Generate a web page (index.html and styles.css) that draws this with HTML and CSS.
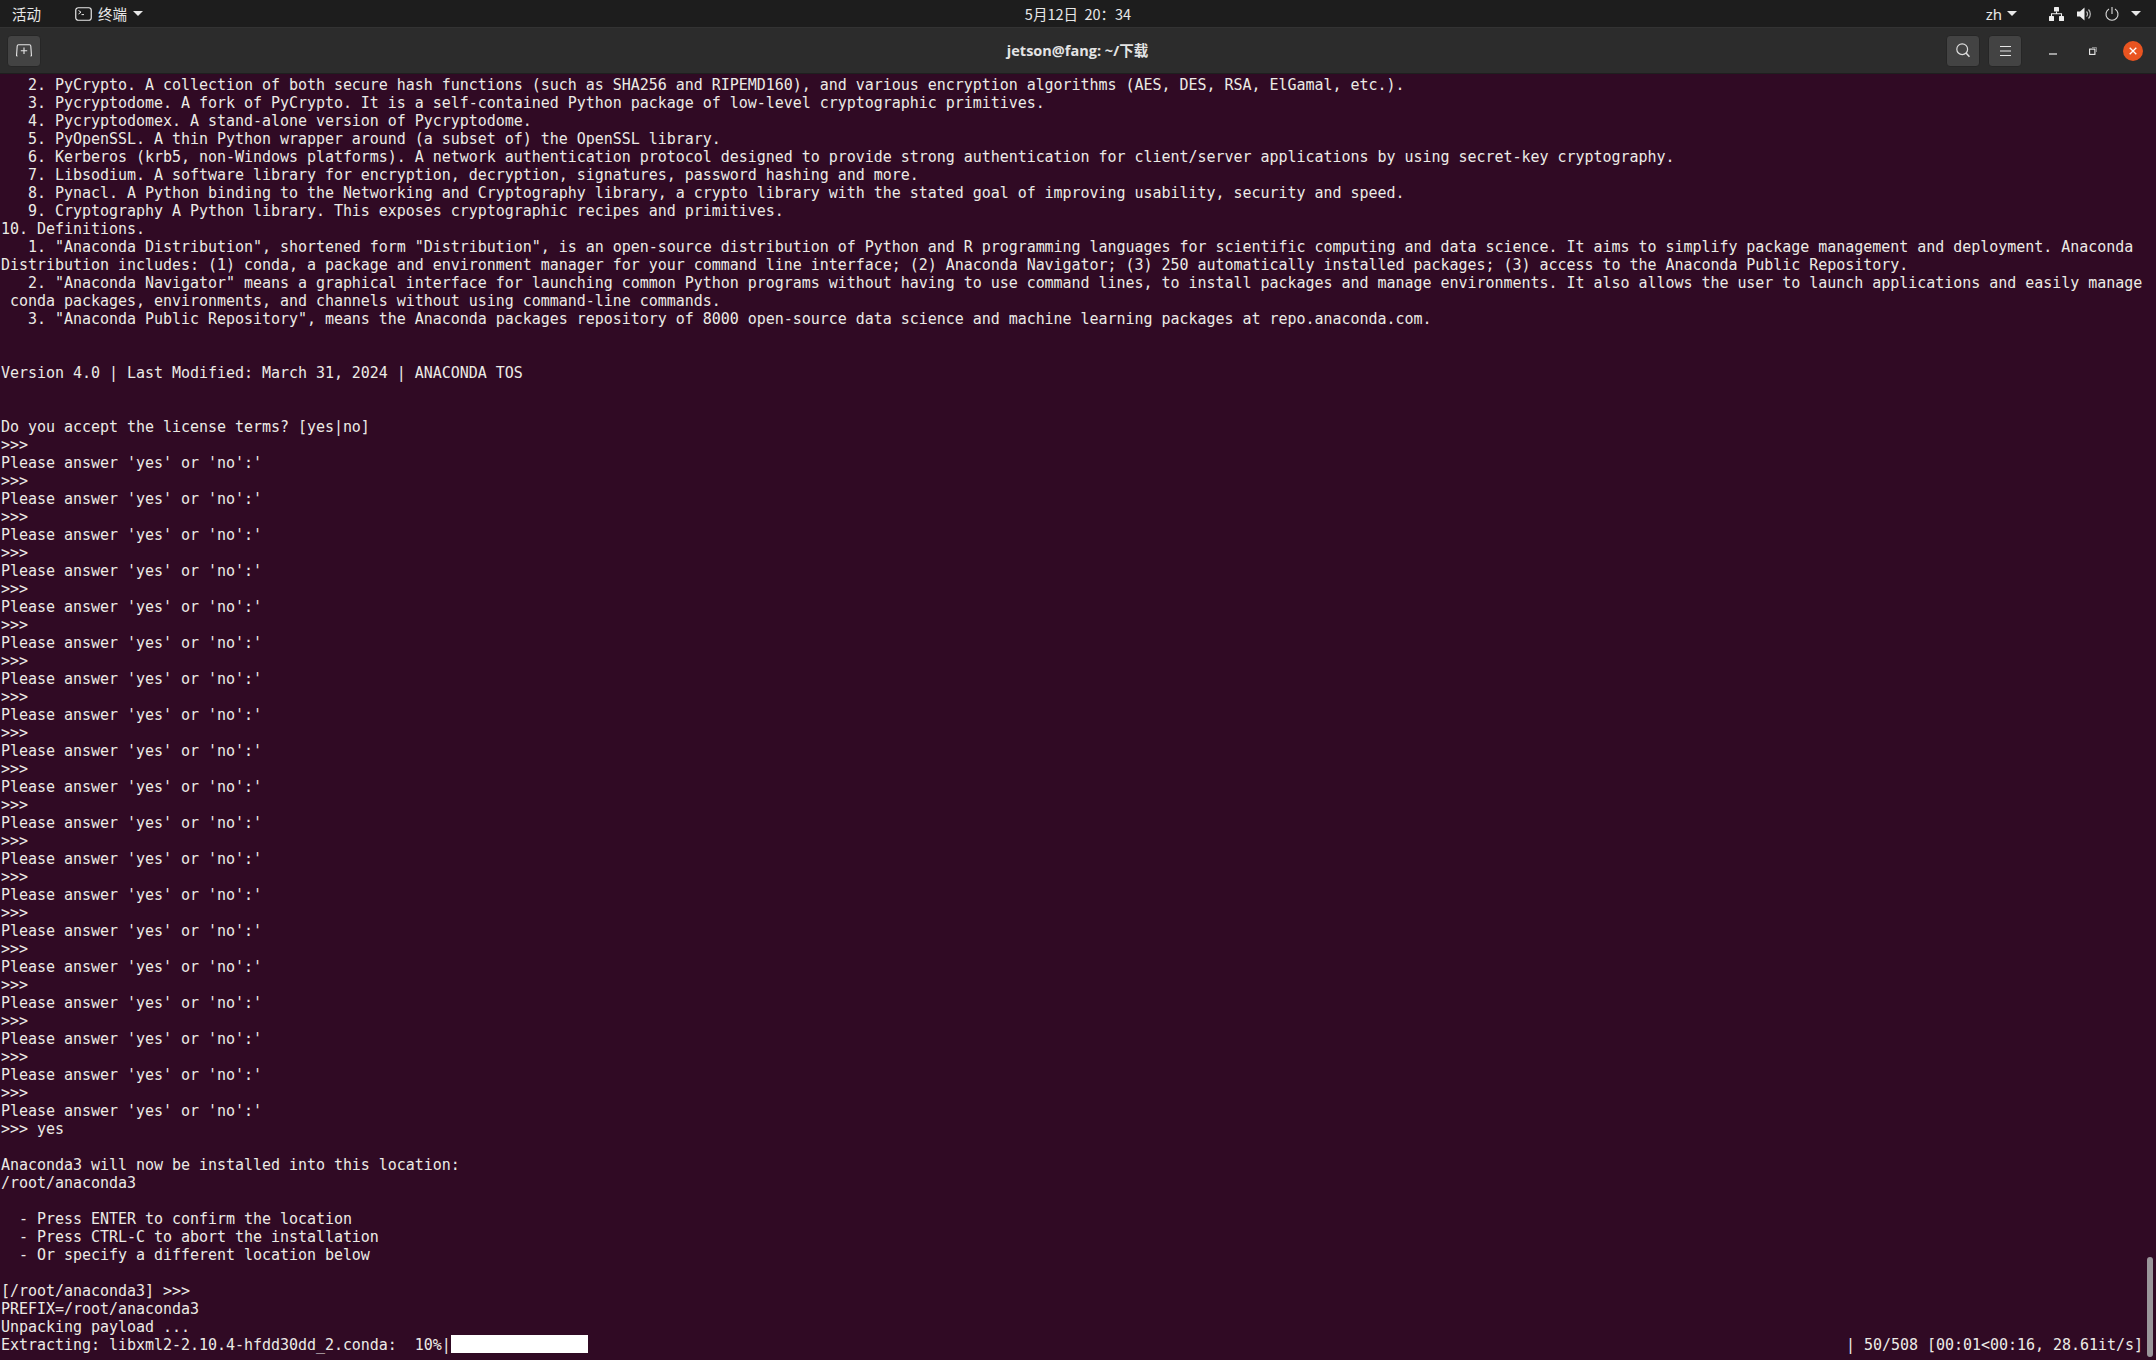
FILE: index.html
```html
<!DOCTYPE html>
<html lang="zh">
<head>
<meta charset="utf-8">
<title>jetson@fang: ~/下载</title>
<link rel="stylesheet" href="styles.css">
</head>
<body>
<div class="topbar">
  <div class="tb-left">
    <span class="tb-text activities">活动</span>
    <span class="app-menu">
      <svg class="term-icon" width="17" height="14" viewBox="0 0 17 14"><rect x="0.75" y="0.75" width="15.5" height="12.5" rx="2.5" fill="none" stroke="#e8e8e8" stroke-width="1.2"/><path d="M3.5 3.5 L6 5.2 L3.5 7 M6.5 7.6 H9" fill="none" stroke="#e8e8e8" stroke-width="1"/></svg>
      <span class="tb-text">终端</span>
      <i class="caret"></i>
    </span>
  </div>
  <div class="tb-clock">5月12日&nbsp; 20<span class="colon">：</span>34</div>
  <div class="tb-right">
    <span class="tb-lang">zh</span><i class="caret lang-caret"></i>
    <svg class="tray net" width="15" height="14" viewBox="0 0 15 14"><rect x="5" y="0" width="5" height="4.5" rx="0.6" fill="#eee"/><rect x="0" y="9" width="5" height="5" rx="0.6" fill="#eee"/><rect x="10" y="9" width="5" height="5" rx="0.6" fill="#eee"/><path d="M7.5 4.5 V7 M2.5 9 V6.8 H12.5 V9" fill="none" stroke="#eee" stroke-width="1.1"/></svg>
    <svg class="tray vol" width="15" height="14" viewBox="0 0 15 14"><path d="M0 4.5 H3 L7.5 0.5 V13.5 L3 9.5 H0 Z" fill="#eee"/><path d="M9.5 4.5 A3.5 3.5 0 0 1 9.5 9.5 M11.5 2.5 A6.5 6.5 0 0 1 11.5 11.5" fill="none" stroke="#bbb" stroke-width="1.2"/></svg>
    <svg class="tray pow" width="14" height="14" viewBox="0 0 14 14"><path d="M4 2 A6 6 0 1 0 10 2" fill="none" stroke="#ddd" stroke-width="1.1"/><path d="M7 0 V7" fill="none" stroke="#ddd" stroke-width="1.1"/></svg>
    <i class="caret pow-caret"></i>
  </div>
</div>
<header class="titlebar">
  <button class="hb-btn new-tab"><svg width="16" height="13" viewBox="0 0 16 13"><path d="M0.5 12 L1.2 2 Q1.3 0.7 2.5 0.7 H13.5 Q14.7 0.7 14.8 2 L15.5 12 M14.5 12 H15.5 M0.5 12 H1.5 M8 3.5 V10 M4.8 6.8 H11.2" fill="none" stroke="#e6e6e6" stroke-width="1.1"/></svg></button>
  <div class="title">jetson@fang: ~/下载</div>
  <div class="hb-right">
    <button class="hb-btn"><svg width="14" height="15" viewBox="0 0 14 15"><circle cx="6.2" cy="6.2" r="5.4" fill="none" stroke="#ddd" stroke-width="1.2"/><path d="M10 10 L13.5 13.8" stroke="#ddd" stroke-width="1.6" fill="none"/></svg></button>
    <button class="hb-btn menu-btn"><svg width="11" height="10" viewBox="0 0 11 10"><path d="M0 0.5 H11 M0 5 H11 M0 9.5 H11" stroke="#e6e6e6" stroke-width="1" fill="none"/></svg></button>
    <span class="win win-min"><svg width="8" height="2" viewBox="0 0 8 2"><path d="M0 1 H8" stroke="#eee" stroke-width="1.2"/></svg></span>
    <span class="win win-max"><svg width="8" height="8" viewBox="0 0 8 8"><rect x="0.6" y="2.1" width="5.3" height="5.3" fill="none" stroke="#eee" stroke-width="1.1"/><path d="M3 0.5 H7.5 V5" fill="none" stroke="#999" stroke-width="0.8"/></svg></span>
    <span class="win-close"><svg width="8" height="8" viewBox="0 0 8 8"><path d="M0.7 0.7 L7.3 7.3 M7.3 0.7 L0.7 7.3" stroke="#fff" stroke-width="1.3"/></svg></span>
  </div>
</header>
<main class="terminal">
<pre class="output">   2. PyCrypto. A collection of both secure hash functions (such as SHA256 and RIPEMD160), and various encryption algorithms (AES, DES, RSA, ElGamal, etc.).
   3. Pycryptodome. A fork of PyCrypto. It is a self-contained Python package of low-level cryptographic primitives.
   4. Pycryptodomex. A stand-alone version of Pycryptodome.
   5. PyOpenSSL. A thin Python wrapper around (a subset of) the OpenSSL library.
   6. Kerberos (krb5, non-Windows platforms). A network authentication protocol designed to provide strong authentication for client/server applications by using secret-key cryptography.
   7. Libsodium. A software library for encryption, decryption, signatures, password hashing and more.
   8. Pynacl. A Python binding to the Networking and Cryptography library, a crypto library with the stated goal of improving usability, security and speed.
   9. Cryptography A Python library. This exposes cryptographic recipes and primitives.
10. Definitions.
   1. "Anaconda Distribution", shortened form "Distribution", is an open-source distribution of Python and R programming languages for scientific computing and data science. It aims to simplify package management and deployment. Anaconda
Distribution includes: (1) conda, a package and environment manager for your command line interface; (2) Anaconda Navigator; (3) 250 automatically installed packages; (3) access to the Anaconda Public Repository.
   2. "Anaconda Navigator" means a graphical interface for launching common Python programs without having to use command lines, to install packages and manage environments. It also allows the user to launch applications and easily manage
 conda packages, environments, and channels without using command-line commands.
   3. "Anaconda Public Repository", means the Anaconda packages repository of 8000 open-source data science and machine learning packages at repo.anaconda.com.


Version 4.0 | Last Modified: March 31, 2024 | ANACONDA TOS


Do you accept the license terms? [yes|no]
&gt;&gt;&gt;
Please answer 'yes' or 'no':'
&gt;&gt;&gt;
Please answer 'yes' or 'no':'
&gt;&gt;&gt;
Please answer 'yes' or 'no':'
&gt;&gt;&gt;
Please answer 'yes' or 'no':'
&gt;&gt;&gt;
Please answer 'yes' or 'no':'
&gt;&gt;&gt;
Please answer 'yes' or 'no':'
&gt;&gt;&gt;
Please answer 'yes' or 'no':'
&gt;&gt;&gt;
Please answer 'yes' or 'no':'
&gt;&gt;&gt;
Please answer 'yes' or 'no':'
&gt;&gt;&gt;
Please answer 'yes' or 'no':'
&gt;&gt;&gt;
Please answer 'yes' or 'no':'
&gt;&gt;&gt;
Please answer 'yes' or 'no':'
&gt;&gt;&gt;
Please answer 'yes' or 'no':'
&gt;&gt;&gt;
Please answer 'yes' or 'no':'
&gt;&gt;&gt;
Please answer 'yes' or 'no':'
&gt;&gt;&gt;
Please answer 'yes' or 'no':'
&gt;&gt;&gt;
Please answer 'yes' or 'no':'
&gt;&gt;&gt;
Please answer 'yes' or 'no':'
&gt;&gt;&gt;
Please answer 'yes' or 'no':'
&gt;&gt;&gt; yes

Anaconda3 will now be installed into this location:
/root/anaconda3

  - Press ENTER to confirm the location
  - Press CTRL-C to abort the installation
  - Or specify a different location below

[/root/anaconda3] &gt;&gt;&gt;
PREFIX=/root/anaconda3
Unpacking payload ...</pre>
<div class="progress">
  <span class="p-text">Extracting: libxml2-2.10.4-hfdd30dd_2.conda:  10%|</span><span class="p-bar"></span><span class="p-text p-right">| 50/508 [00:01&lt;00:16, 28.61it/s]</span>
</div>
<div class="scroll-thumb"></div>
</main>
</body>
</html>
```
FILE: styles.css
```css
* { box-sizing: border-box; }
html, body { margin: 0; padding: 0; height: 100%; overflow: hidden; }
body { width: 2156px; height: 1360px; display: flex; flex-direction: column; background: #300a24; }

.topbar {
  flex: 0 0 27px;
  display: grid;
  grid-template-columns: 1fr auto 1fr;
  align-items: center;
  background: #1d1d1d;
  color: #e8e8e8;
  font: 14.5px "Noto Sans CJK SC", "Noto Sans", sans-serif;
}
.tb-left { display: flex; align-items: center; padding-left: 12px; }
.activities { margin-right: 34px; }
.app-menu { display: flex; align-items: center; }
.term-icon { margin-right: 6px; }
.caret {
  width: 0; height: 0; display: inline-block;
  border-left: 5px solid transparent;
  border-right: 5px solid transparent;
  border-top: 5px solid #e8e8e8;
  margin-left: 6px;
}
.tb-clock { font-size: 14.5px; }
.colon { font-family: "Noto Sans CJK TC", sans-serif; }
.tb-right { display: flex; align-items: center; justify-content: flex-end; padding-right: 15px; }
.tb-lang { font-size: 15px; font-family: "Noto Sans", sans-serif; }
.lang-caret { margin-left: 5px; margin-right: 32px; }
.tray { display: block; }
.vol { margin-left: 13px; }
.pow { margin-left: 13px; }
.pow-caret { margin-left: 12px; }

.titlebar {
  flex: 0 0 47px;
  display: grid;
  grid-template-columns: 1fr auto 1fr;
  align-items: center;
  background: #2c2c2c;
  border-top: 1px solid #333;
  border-bottom: 1px solid #1f1f1f;
  padding: 0 0 2px 7px;
}
.title { color: #e4e4e4; font: bold 14.5px "Open Sans", "Noto Sans CJK SC", sans-serif; padding-right: 8px; }
.hb-btn {
  width: 34px; height: 32px; padding: 0;
  display: flex; align-items: center; justify-content: center;
  background: #434343;
  border: 1px solid #262626;
  border-radius: 4px;
}
.new-tab { justify-self: start; margin-top: 2px; }
.hb-right { display: flex; align-items: center; justify-content: flex-end; padding: 2px 13px 0 0; }
.menu-btn { margin-left: 8px; }
.win { width: 39px; display: flex; justify-content: center; }
.win-min { margin-left: 11px; padding-top: 6px; }
.win-max { margin-left: 1px; }
.win-close {
  width: 20px; height: 20px; margin-left: 11px; border-radius: 50%;
  background: #e95420;
  display: flex; align-items: center; justify-content: center;
}

.terminal { flex: 1; position: relative; padding: 2px 0 0 1px; min-height: 0; }
.output, .progress {
  margin: 0;
  font: 15px/18px "DejaVu Sans Mono", monospace;
  letter-spacing: -0.034px;
  color: #ecebe6;
  white-space: pre;
}
.progress { display: flex; align-items: flex-start; width: 2142px; }
.p-bar { width: 137px; height: 18px; background: #fff; margin: -1px 0 0 0; }
.p-right { margin-left: auto; }
.scroll-thumb {
  position: absolute; right: 3px; bottom: 3px;
  width: 6px; height: 100px; border-radius: 3px; background: #9a969a;
}
```
